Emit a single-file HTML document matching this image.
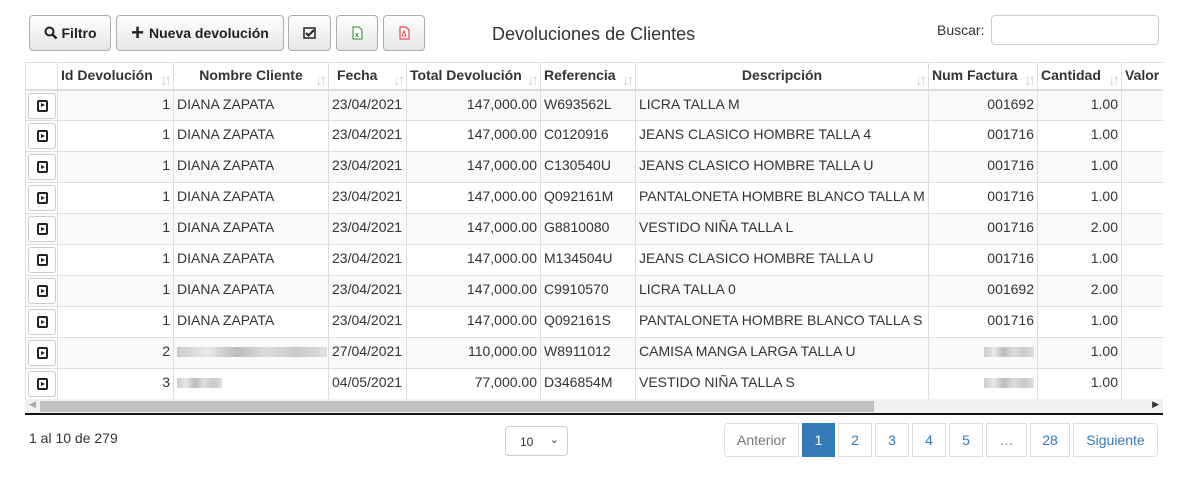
<!DOCTYPE html>
<html><head><meta charset="utf-8"><style>
*{box-sizing:border-box}
body{margin:0;width:1180px;height:481px;background:#fff;font-family:"Liberation Sans",Arial,sans-serif;font-size:14px;color:#333;position:relative;overflow:hidden}
.btn{position:absolute;top:15px;height:36px;border:1px solid #adadad;border-radius:4px;background:linear-gradient(#fff,#e6e6e6);font-weight:bold;font-size:14px;display:flex;align-items:center;justify-content:center;color:#222}
.title{position:absolute;left:492px;top:24px;font-size:18px;color:#333}
.lbl{position:absolute;left:937px;top:22px;font-size:14px}
.inp{position:absolute;left:991px;top:15px;width:168px;height:30px;border:1px solid #ccc;border-radius:4px}
.wrap{position:absolute;left:25px;top:62px;width:1138px;height:337px;overflow:hidden}
table{border-collapse:collapse;table-layout:fixed;width:1160px}
tr{height:31px}
tr.h{height:27px}
td,th{border:1px solid #ddd;padding:5px 3px 0;line-height:16px;vertical-align:top;white-space:nowrap;overflow:hidden;font-size:14px}
th{font-weight:bold;text-align:center;position:relative;border-bottom:2px solid #ddd;padding-top:4px}
th .s{position:absolute;right:4px;bottom:0px;color:#ccc;font-size:15px;font-weight:bold;letter-spacing:-3px}
tr.o td{background:#f9f9f9}
.r{text-align:right}
.pb{display:block;width:28px;height:26px;border:1px solid #ccc;border-radius:3px;background:#fff;margin:-3px 0 -7px -1px;position:relative}
.pb i{position:absolute;left:8px;top:6px;width:11px;height:12px;border:2px solid #222;border-radius:2px}
.pb i:after{content:"";position:absolute;left:2px;top:1.5px;border-left:4px solid #222;border-top:2.5px solid transparent;border-bottom:2.5px solid transparent}
.blur{display:inline-block;height:10px;background:linear-gradient(90deg,#ccc,#e8e8e8,#bbb,#ddd,#c8c8c8,#e0e0e0);vertical-align:middle}
.sb{position:absolute;left:25px;top:399px;width:1138px;height:16px;background:#f0f0f0;border-bottom:2px solid #111}
.sb .t{position:absolute;left:15px;top:2px;width:834px;height:11px;background:#c1c1c1}
.pg{position:absolute;top:423px;height:34px;border:1px solid #ddd;display:flex;align-items:center;justify-content:center;color:#337ab7;font-size:14px;background:#fff}
</style></head><body>
<div class="btn" style="left:29px;width:82px"><svg width="14" height="14" viewBox="0 0 14 14" style="margin-right:4px"><circle cx="5.5" cy="5.5" r="4" fill="none" stroke="#222" stroke-width="2"/><path d="M8.5 8.5L12.5 12.5" stroke="#222" stroke-width="2.5"/></svg>Filtro</div>
<div class="btn" style="left:116px;width:168px"><span style="font-size:22px;margin-right:5px;font-weight:bold">+</span>Nueva devolución</div>
<div class="btn" style="left:288px;width:43px"><svg width="13" height="12"><rect x="1" y="1" width="11" height="10" fill="none" stroke="#222" stroke-width="1.5"/><path d="M3 6l2.5 2.5L11 3" stroke="#222" stroke-width="2" fill="none"/></svg></div>
<div class="btn" style="left:336px;width:42px"><svg width="11" height="14"><path d="M1 1h6l3 3v9H1z" fill="#fff" stroke="#2a8a2a"/><text x="3" y="11" font-size="7" fill="#2a8a2a" font-family="Liberation Sans">x</text></svg></div>
<div class="btn" style="left:383px;width:42px"><svg width="11" height="14"><path d="M1 1h6l3 3v9H1z" fill="#fff" stroke="#e22"/><path d="M3 10l2-5 2 5z" fill="none" stroke="#e22" stroke-width=".8"/></svg></div>
<div class="title">Devoluciones de Clientes</div>
<div class="lbl">Buscar:</div><div class="inp"></div>
<div class="wrap"><table>
<colgroup><col style="width:32px"><col style="width:116px"><col style="width:155px"><col style="width:78px"><col style="width:134px"><col style="width:95px"><col style="width:293px"><col style="width:109px"><col style="width:84px"><col style="width:64px"></colgroup>
<tr class="h"><th></th><th style="text-align:left">Id Devolución<span class="s">↓↑</span></th><th>Nombre Cliente<span class="s">↓↑</span></th><th style="text-align:left;padding-left:8px">Fecha<span class="s">↓↑</span></th><th style="text-align:left">Total Devolución<span class="s">↓↑</span></th><th style="text-align:left">Referencia<span class="s">↓↑</span></th><th>Descripción<span class="s">↓↑</span></th><th style="text-align:left">Num Factura<span class="s">↓↑</span></th><th style="text-align:left">Cantidad<span class="s">↓↑</span></th><th style="text-align:left">Valor</th></tr>
<tr class="o"><td><span class="pb"><i></i></span></td><td class="r">1</td><td>DIANA ZAPATA</td><td>23/04/2021</td><td class="r">147,000.00</td><td>W693562L</td><td>LICRA TALLA M</td><td class="r">001692</td><td class="r">1.00</td><td></td></tr>
<tr><td><span class="pb"><i></i></span></td><td class="r">1</td><td>DIANA ZAPATA</td><td>23/04/2021</td><td class="r">147,000.00</td><td>C0120916</td><td>JEANS CLASICO HOMBRE TALLA 4</td><td class="r">001716</td><td class="r">1.00</td><td></td></tr>
<tr class="o"><td><span class="pb"><i></i></span></td><td class="r">1</td><td>DIANA ZAPATA</td><td>23/04/2021</td><td class="r">147,000.00</td><td>C130540U</td><td>JEANS CLASICO HOMBRE TALLA U</td><td class="r">001716</td><td class="r">1.00</td><td></td></tr>
<tr><td><span class="pb"><i></i></span></td><td class="r">1</td><td>DIANA ZAPATA</td><td>23/04/2021</td><td class="r">147,000.00</td><td>Q092161M</td><td>PANTALONETA HOMBRE BLANCO TALLA M</td><td class="r">001716</td><td class="r">1.00</td><td></td></tr>
<tr class="o"><td><span class="pb"><i></i></span></td><td class="r">1</td><td>DIANA ZAPATA</td><td>23/04/2021</td><td class="r">147,000.00</td><td>G8810080</td><td>VESTIDO NIÑA TALLA L</td><td class="r">001716</td><td class="r">2.00</td><td></td></tr>
<tr><td><span class="pb"><i></i></span></td><td class="r">1</td><td>DIANA ZAPATA</td><td>23/04/2021</td><td class="r">147,000.00</td><td>M134504U</td><td>JEANS CLASICO HOMBRE TALLA U</td><td class="r">001716</td><td class="r">1.00</td><td></td></tr>
<tr class="o"><td><span class="pb"><i></i></span></td><td class="r">1</td><td>DIANA ZAPATA</td><td>23/04/2021</td><td class="r">147,000.00</td><td>C9910570</td><td>LICRA TALLA 0</td><td class="r">001692</td><td class="r">2.00</td><td></td></tr>
<tr><td><span class="pb"><i></i></span></td><td class="r">1</td><td>DIANA ZAPATA</td><td>23/04/2021</td><td class="r">147,000.00</td><td>Q092161S</td><td>PANTALONETA HOMBRE BLANCO TALLA S</td><td class="r">001716</td><td class="r">1.00</td><td></td></tr>
<tr class="o"><td><span class="pb"><i></i></span></td><td class="r">2</td><td><span class="blur" style="width:150px"></span></td><td>27/04/2021</td><td class="r">110,000.00</td><td>W8911012</td><td>CAMISA MANGA LARGA TALLA U</td><td class="r"><span class="blur" style="width:50px"></span></td><td class="r">1.00</td><td></td></tr>
<tr><td><span class="pb"><i></i></span></td><td class="r">3</td><td><span class="blur" style="width:45px"></span></td><td>04/05/2021</td><td class="r">77,000.00</td><td>D346854M</td><td>VESTIDO NIÑA TALLA S</td><td class="r"><span class="blur" style="width:50px"></span></td><td class="r">1.00</td><td></td></tr>
</table></div>
<div class="sb"><div class="t"></div><span style="position:absolute;left:4px;top:0;font-size:9px;color:#aaa">◀</span><span style="position:absolute;right:4px;top:0;font-size:9px;color:#333">▶</span></div>
<div style="position:absolute;left:29px;top:430px">1 al 10 de 279</div>
<div style="position:absolute;left:505px;top:426px;width:63px;height:30px;border:1px solid #ccc;border-radius:4px;font-size:12px;padding:8px 0 0 14px">10<span style="position:absolute;right:8px;top:6px;font-size:11px">⌄</span></div>
<div class="pg" style="left:724px;width:75px;color:#777;border-radius:4px 0 0 4px">Anterior</div>
<div class="pg" style="left:802px;width:33px;background:#337ab7;color:#fff;border-color:#337ab7">1</div>
<div class="pg" style="left:838px;width:34px">2</div>
<div class="pg" style="left:875px;width:34px">3</div>
<div class="pg" style="left:912px;width:34px">4</div>
<div class="pg" style="left:949px;width:34px">5</div>
<div class="pg" style="left:986px;width:41px;color:#777">…</div>
<div class="pg" style="left:1030px;width:40px">28</div>
<div class="pg" style="left:1073px;width:85px;border-radius:0 4px 4px 0">Siguiente</div>
</body></html>
